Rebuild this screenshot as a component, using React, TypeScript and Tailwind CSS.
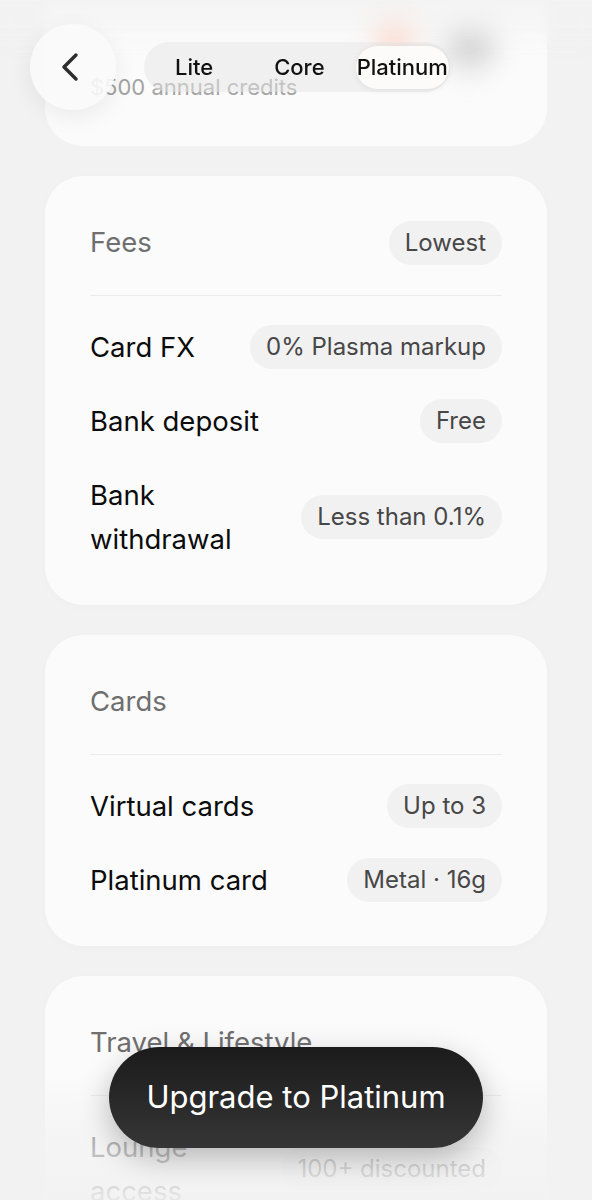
type Row = { label: string; value: string };

const fees: Row[] = [
  { label: "Card FX", value: "0% Plasma markup" },
  { label: "Bank deposit", value: "Free" },
  { label: "Bank\nwithdrawal", value: "Less than 0.1%" },
];

const cards: Row[] = [
  { label: "Virtual cards", value: "Up to 3" },
  { label: "Platinum card", value: "Metal · 16g" },
];

const travel: Row[] = [{ label: "Lounge\naccess", value: "100+ discounted" }];

function Pill({ children }: { children: React.ReactNode }) {
  return (
    <span className="flex h-[44px] shrink-0 items-center rounded-full bg-[#f1f1f1] px-[16px] text-[24px] text-[#474747]">
      {children}
    </span>
  );
}

function Section({
  title,
  badge,
  rows,
}: {
  title: string;
  badge?: string;
  rows: Row[];
}) {
  return (
    <section className="rounded-[38px] bg-[#fbfbfb] px-[45px] pb-[44px] pt-[45px] shadow-[0_2px_10px_rgba(0,0,0,0.02)]">
      <div className="flex h-[44px] items-center justify-between">
        <h2 className="text-[27.5px] font-normal text-[#6f6f6f]">{title}</h2>
        {badge && <Pill>{badge}</Pill>}
      </div>
      <div className="mt-[30px] h-px bg-[#ebebeb]" />
      <div className="mt-[29px] flex flex-col gap-[30px]">
        {rows.map((row) => (
          <div key={row.label} className="flex items-center justify-between gap-4">
            <span className="whitespace-pre-line text-[27.5px] leading-[44px] text-[#0c0c0c]">
              {row.label}
            </span>
            <Pill>{row.value}</Pill>
          </div>
        ))}
      </div>
    </section>
  );
}

export default function App() {
  return (
    <div
      className="relative h-[1200px] overflow-hidden bg-[#f2f2f2]"
      style={{ fontFamily: "Inter, 'Noto Sans', sans-serif" }}
    >
      <main className="flex flex-col gap-[30px] px-[45px]">
        {/* credits card, mostly scrolled off */}
        <section className="-mt-[40px] rounded-b-[38px] bg-[#fbfbfb] px-[45px] pb-[44px] pt-[44px]">
          <div className="relative h-[68px]">
            <div className="absolute left-[285px] top-[6px] h-[50px] w-[40px] rounded-full bg-[#ffc9b5]/60 blur-[12px]" />
            <div className="absolute left-[355px] top-[16px] h-[50px] w-[50px] rounded-full bg-[#c4c4c4]/70 blur-[14px]" />
          </div>
          <p className="text-[22px] leading-[30px] text-[#a3a3a3]">$500 annual credits</p>
        </section>

        <Section title="Fees" badge="Lowest" rows={fees} />
        <Section title="Cards" rows={cards} />
        <Section title="Travel & Lifestyle" rows={travel} />
      </main>

      {/* top frosted header */}
      <div className="pointer-events-none absolute inset-x-0 top-0 h-[60px] bg-gradient-to-b from-[#f2f2f2]/80 to-[#f2f2f2]/0 backdrop-blur-[6px] [mask-image:linear-gradient(to_bottom,black_40%,transparent)]" />
      <header className="absolute left-[30px] top-[24px] flex items-center gap-[28px]">
        <button className="flex h-[86px] w-[86px] items-center justify-center rounded-full bg-[#f9f9f9]/90 shadow-[0_6px_24px_rgba(0,0,0,0.07)]">
          <svg width="20" height="32" viewBox="0 0 20 32" className="-ml-[6px]">
            <polyline
              points="16,4 4,16 16,28"
              fill="none"
              stroke="#2e2e2e"
              strokeWidth="3.5"
              strokeLinecap="round"
              strokeLinejoin="round"
            />
          </svg>
        </button>
        <nav className="flex h-[50px] w-[306px] items-center rounded-full bg-[#e6e6e6]/50 pl-[31px] pr-[4px] text-[22px] font-medium text-[#111]">
          <span>Lite</span>
          <span className="ml-[61px]">Core</span>
          <span className="ml-[31px] flex h-[43px] items-center rounded-full bg-[#fdfbfa] px-[1px] shadow-[0_1px_6px_rgba(0,0,0,0.08)]">
            Platinum
          </span>
        </nav>
      </header>

      {/* bottom fade */}
      <div className="pointer-events-none absolute inset-x-0 bottom-0 h-[130px] bg-gradient-to-b from-[#f2f2f2]/0 via-[#f2f2f2]/70 to-[#f2f2f2]/95" />

      <div className="absolute inset-x-0 bottom-[52px] flex justify-center">
        <button className="flex h-[101px] w-[374px] items-center justify-center rounded-full bg-gradient-to-b from-[#1b1b1b] to-[#363636] text-[31px] text-white shadow-[0_10px_30px_rgba(0,0,0,0.25)]">
          Upgrade to Platinum
        </button>
      </div>
    </div>
  );
}
